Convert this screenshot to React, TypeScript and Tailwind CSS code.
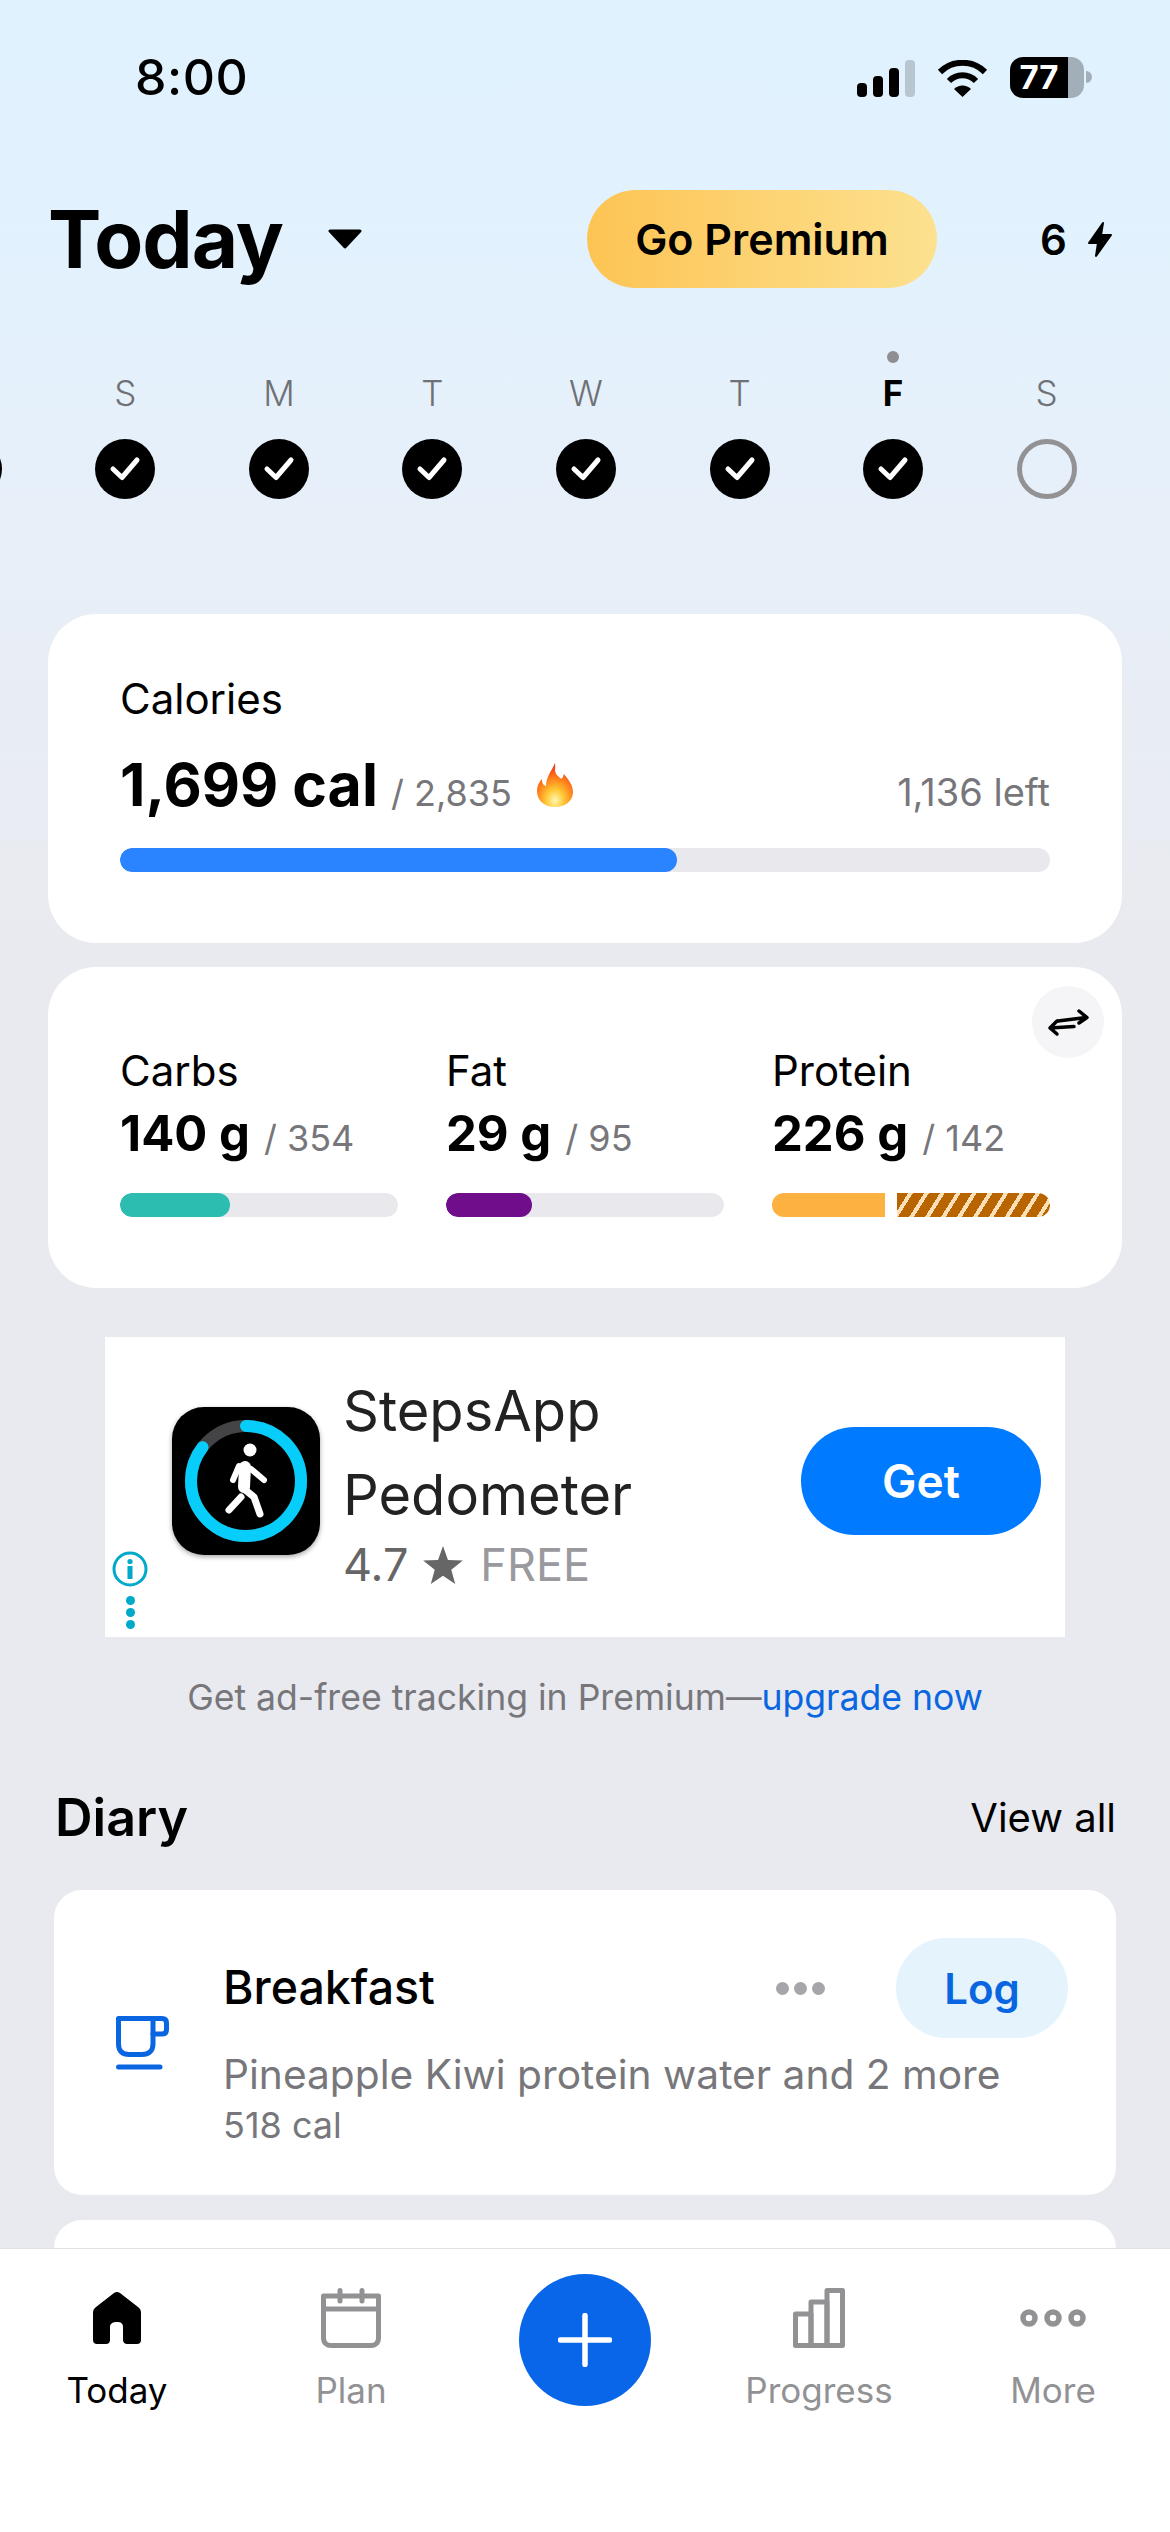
const days = [
  { label: '', done: true },
  { label: 'S', done: true },
  { label: 'M', done: true },
  { label: 'T', done: true },
  { label: 'W', done: true },
  { label: 'T', done: true },
  { label: 'F', done: true, today: true },
  { label: 'S', done: false },
  { label: '', done: false }
]

function StatusBar() {
  return (
    <div className="flex h-[154px] items-center pl-[135px] pr-[78px]">
      <span className="text-[50px] font-medium tracking-[0.5px] text-black">8:00</span>
      <div className="ml-auto flex items-center">
        <svg width="58" height="37" viewBox="0 0 58 37" className="mt-[2px]">
          <rect x="0" y="23" width="10" height="14" rx="4" fill="#000" />
          <rect x="16" y="16" width="10" height="21" rx="4" fill="#000" />
          <rect x="32" y="8" width="10" height="29" rx="4" fill="#000" />
          <rect x="48" y="0" width="10" height="37" rx="4" fill="#b8c6cf" />
        </svg>
        <svg width="51" height="37" viewBox="0 0 51 37" className="ml-[22px] mt-[2px]">
          <path d="M3 12 A 32 32 0 0 1 48 12" fill="none" stroke="#000" strokeWidth="6" />
          <path d="M12 21 A 19 19 0 0 1 39 21" fill="none" stroke="#000" strokeWidth="6" />
          <path d="M17 29 A 12 12 0 0 1 34 29 L25.5 37 Z" fill="#000" />
        </svg>
        <div className="ml-[22px] flex h-[41px] w-[74px] overflow-hidden rounded-[13px]">
          <div className="flex w-[58px] items-center justify-center bg-black text-[33px] font-bold leading-none text-white">
            77
          </div>
          <div className="flex-1 bg-[#a2afb9]" />
        </div>
        <div className="ml-[2px] h-[12px] w-[6px] rounded-r-full bg-[#a2afb9]" />
      </div>
    </div>
  )
}

function Header() {
  return (
    <div className="mt-[36px] flex h-[98px] items-center pl-[48px]">
      <span className="text-[80px] font-bold leading-none tracking-[-1px] text-black">Today</span>
      <svg width="36" height="20" viewBox="0 0 36 20" className="ml-[44px]">
        <path d="M3 2 H33 L18 18 Z" fill="#000" stroke="#000" strokeWidth="3" strokeLinejoin="round" />
      </svg>
      <button className="ml-[224px] flex h-[98px] w-[350px] items-center justify-center rounded-[49px] bg-gradient-to-r from-[#fdc452] to-[#fce18f] text-[43px] font-semibold text-black">
        Go Premium
      </button>
      <span className="ml-[103px] text-[42px] font-semibold text-black">6</span>
      <svg width="24" height="35" viewBox="0 0 24 35" className="ml-[21px]">
        <path d="M15 1 L1 21 H10 L8 34 L23 13 H13 Z" fill="#000" stroke="#000" strokeWidth="2" strokeLinejoin="round" />
      </svg>
    </div>
  )
}

function WeekStrip() {
  return (
    <div className="ml-[-105px] mt-[63px] grid w-[1382px] grid-cols-9">
      {days.map((d, i) => (
        <div key={i} className="flex flex-col items-center">
          <div className={`h-3 w-3 rounded-full ${d.today ? 'bg-[#8e8e93]' : 'bg-transparent'}`} />
          <span
            className={`mt-[8px] h-[44px] text-[35px] leading-[44px] ${
              d.today ? 'font-bold text-black' : 'font-light text-[#6f7175]'
            }`}
          >
            {d.label}
          </span>
          {d.done ? (
            <div className="mt-[24px] flex h-[60px] w-[60px] items-center justify-center rounded-full bg-black">
              <svg width="60" height="60" viewBox="0 0 60 60">
                <path d="M18 30 L27 38.5 L42 21" fill="none" stroke="#fff" strokeWidth="5" strokeLinecap="round" strokeLinejoin="round" />
              </svg>
            </div>
          ) : (
            <div className="mt-[24px] h-[60px] w-[60px] rounded-full border-[5px] border-[#929295]" />
          )}
        </div>
      ))}
    </div>
  )
}

function Flame() {
  return (
    <svg width="38" height="46" viewBox="0 0 38 46" className="ml-[24px] self-center">
      <defs>
        <radialGradient id="flame" cx="50%" cy="85%" r="75%">
          <stop offset="0%" stopColor="#fff7b0" />
          <stop offset="35%" stopColor="#ffc531" />
          <stop offset="70%" stopColor="#ff7a1a" />
          <stop offset="100%" stopColor="#f0401a" />
        </radialGradient>
      </defs>
      <path
        d="M19 1 C20 7 17 10 23 15 C27 19 27 14 28 12 C32 17 37 23 37 30 C37 39 29 45 19 45 C9 45 1 39 1 29 C1 24 3 20 6 17 C6 21 7 23 10 24 C10 15 15 10 19 1 Z"
        fill="url(#flame)"
      />
    </svg>
  )
}

function CaloriesCard() {
  return (
    <div className="mx-[48px] mt-[115px] h-[329px] rounded-[48px] bg-white px-[72px] pt-[61px]">
      <div className="text-[42px] leading-[48px] text-black">Calories</div>
      <div className="mt-[28px] flex h-[68px] items-baseline">
        <span className="text-[59px] font-bold leading-[68px] text-black">1,699 cal</span>
        <span className="ml-[13px] text-[36px] text-[#77777b]">/ 2,835</span>
        <Flame />
        <span className="ml-auto text-[38px] text-[#77777b]">1,136 left</span>
      </div>
      <div className="mt-[29px] h-[24px] overflow-hidden rounded-[12px] bg-[#e9e9ed]">
        <div className="h-full w-[557px] rounded-[12px] bg-[#2a84ff]" />
      </div>
    </div>
  )
}

function Macro({ name, value, goal, children }: { name: string; value: string; goal: string; children: React.ReactNode }) {
  return (
    <div>
      <div className="text-[42px] leading-[48px] text-black">{name}</div>
      <div className="mt-[9px] flex h-[60px] items-baseline whitespace-nowrap">
        <span className="text-[49px] font-bold leading-[60px] text-black">{value}</span>
        <span className="ml-[14px] text-[36px] text-[#77777b]">/ {goal}</span>
      </div>
      <div className="mt-[29px] flex h-[24px] overflow-hidden rounded-[12px]">{children}</div>
    </div>
  )
}

function MacrosCard() {
  return (
    <div className="relative mx-[48px] mt-[24px] grid h-[321px] grid-cols-3 gap-x-[48px] rounded-[48px] bg-white px-[72px] pt-[80px]">
      <Macro name="Carbs" value="140 g" goal="354">
        <div className="h-full w-full rounded-[12px] bg-[#e9e9ed]">
          <div className="h-full w-[110px] rounded-[12px] bg-[#2cbcb0]" />
        </div>
      </Macro>
      <Macro name="Fat" value="29 g" goal="95">
        <div className="h-full w-full rounded-[12px] bg-[#e9e9ed]">
          <div className="h-full w-[86px] rounded-[12px] bg-[#6f0d8a]" />
        </div>
      </Macro>
      <Macro name="Protein" value="226 g" goal="142">
        <div className="h-full w-[113px] bg-[#fdb140]" />
        <div className="ml-[12px] h-full flex-1 bg-[repeating-linear-gradient(122deg,#b86400_0,#b86400_9.5px,#fde0b8_9.5px,#fde0b8_13.5px)]" />
      </Macro>
      <div className="absolute right-[18px] top-[19px] h-[72px] w-[72px] rounded-full bg-[#f5f5f7]">
        <svg width="72" height="72" viewBox="0 0 72 72">
          <g fill="none" stroke="#000" strokeWidth="3.5" strokeLinecap="round" strokeLinejoin="round">
            <path d="M26 35 L54 31.5 M47 25 L55 31.5 L47 37" />
            <path d="M18 42 L42 40.5 M25 35 L18 42 L25 48" />
          </g>
        </svg>
      </div>
    </div>
  )
}

function AppIcon() {
  return (
    <div className="ml-[67px] mt-[70px] h-[148px] w-[148px] shrink-0 rounded-[32px] bg-black shadow-[0_2px_5px_rgba(0,0,0,0.35)]">
      <svg width="148" height="148" viewBox="0 0 148 148">
        <circle cx="74" cy="74" r="55" fill="none" stroke="#444446" strokeWidth="12" />
        <circle
          cx="74"
          cy="74"
          r="55"
          fill="none"
          stroke="#06cdfa"
          strokeWidth="12"
          strokeLinecap="round"
          strokeDasharray="295 346"
          transform="rotate(-90 74 74)"
        />
        <circle cx="78" cy="43" r="6.5" fill="#fff" />
        <g fill="none" stroke="#fff" strokeLinecap="round" strokeLinejoin="round">
          <path d="M73 60 L72 80" strokeWidth="12" />
          <path d="M67 59 L61 73" strokeWidth="6" />
          <path d="M79 62 L92 73" strokeWidth="6" />
          <path d="M72 82 L82 90 L88 107" strokeWidth="7" />
          <path d="M69 90 L57 103" strokeWidth="7" />
        </g>
      </svg>
    </div>
  )
}

function AdBanner() {
  return (
    <div className="relative mx-[105px] mt-[49px] flex h-[300px] bg-white">
      <AppIcon />
      <div className="ml-[23px] pt-[32px]">
        <div className="text-[56px] leading-[84px] text-[#222]">StepsApp</div>
        <div className="text-[56px] leading-[84px] text-[#222]">Pedometer</div>
        <div className="mt-[2px] flex h-[52px] items-center text-[45px] leading-[52px]">
          <span className="text-[#666]">4.7</span>
          <svg width="40" height="38" viewBox="0 0 24 23" className="ml-[15px]">
            <path d="M12 0 L15 8.5 L24 8.8 L17 14.3 L19.4 23 L12 18 L4.6 23 L7 14.3 L0 8.8 L9 8.5 Z" fill="#666" />
          </svg>
          <span className="ml-[17px] text-[#9a9a9e]">FREE</span>
        </div>
      </div>
      <button className="ml-auto mr-[24px] mt-[90px] h-[108px] w-[240px] rounded-[54px] bg-[#007aff] text-[46px] font-semibold text-white">
        Get
      </button>
      <div className="absolute bottom-[8px] left-[7px] flex flex-col items-center">
        <svg width="36" height="36" viewBox="0 0 36 36">
          <circle cx="18" cy="18" r="16" fill="none" stroke="#00a9c9" strokeWidth="3" />
          <circle cx="18" cy="10.5" r="2.6" fill="#00a9c9" />
          <rect x="15.5" y="15" width="5" height="13" fill="#00a9c9" />
        </svg>
        <div className="mt-[9px] flex flex-col gap-[3px]">
          <div className="h-[9px] w-[9px] rounded-full bg-[#00a9c9]" />
          <div className="h-[9px] w-[9px] rounded-full bg-[#00a9c9]" />
          <div className="h-[9px] w-[9px] rounded-full bg-[#00a9c9]" />
        </div>
      </div>
    </div>
  )
}

function DiaryCard() {
  return (
    <div className="mx-[54px] mt-[40px] flex h-[305px] items-center rounded-[28px] bg-white">
      <svg width="56" height="56" viewBox="0 0 56 56" className="ml-[61px] shrink-0" fill="none" stroke="#0a66e0" strokeWidth="5" strokeLinecap="round" strokeLinejoin="round">
        <path d="M3.5 3.5 H38 V29 C38 36 33.5 39.5 27 39.5 H14 C7.5 39.5 3.5 36 3.5 29 Z" />
        <path d="M38 3.5 H47 C50 3.5 51.5 5 51.5 8 V14.5 C51.5 17.5 50 19 47 19 H38" />
        <path d="M3.5 52 H45" />
      </svg>
      <div className="ml-[52px] flex-1 pr-[48px]">
        <div className="flex h-[100px] items-center">
          <span className="text-[46.5px] font-medium text-black">Breakfast</span>
          <div className="ml-auto mr-[71px] flex gap-[5px]">
            <div className="h-[13px] w-[13px] rounded-full bg-[#a6a6aa]" />
            <div className="h-[13px] w-[13px] rounded-full bg-[#a6a6aa]" />
            <div className="h-[13px] w-[13px] rounded-full bg-[#a6a6aa]" />
          </div>
          <button className="h-[100px] w-[172px] rounded-[50px] bg-[#e5f3fd] text-[42px] font-semibold text-[#0a66e0]">
            Log
          </button>
        </div>
        <div className="mt-[11px] text-[40.7px] leading-[52px] text-[#77777b]">
          Pineapple Kiwi protein water and 2 more
        </div>
        <div className="mt-[2px] text-[36px] leading-[44px] text-[#77777b]">518 cal</div>
      </div>
    </div>
  )
}

function NavItem({ label, active, children }: { label: string; active?: boolean; children: React.ReactNode }) {
  return (
    <div className="flex flex-col items-center pt-[39px]">
      <div className="flex h-[60px] items-center justify-center">{children}</div>
      <span className={`mt-[20px] text-[35px] leading-[44px] ${active ? 'text-black' : 'text-[#929295]'}`}>{label}</span>
    </div>
  )
}

function BottomNav() {
  return (
    <div className="grid h-[284px] shrink-0 grid-cols-5 border-t border-[#e2e2e6] bg-white">
      <NavItem label="Today" active>
        <svg width="48" height="52" viewBox="0 0 48 52">
          <path
            fillRule="evenodd"
            d="M24 0 C25 0 26 .5 27 1 L45 15 C47 16.5 48 18 48 21 V48 C48 50.5 46.5 52 44 52 H34 C32 52 30 50.5 30 48 V35 C30 31 27.5 30 24 30 C20.5 30 17 31 17 35 V48 C17 50.5 15.5 52 13 52 H4 C1.5 52 0 50.5 0 48 V21 C0 18 1 16.5 3 15 L21 1 C22 .5 23 0 24 0 Z"
            fill="#000"
          />
        </svg>
      </NavItem>
      <NavItem label="Plan">
        <svg width="60" height="60" viewBox="0 0 60 60" fill="none" stroke="#929295" strokeWidth="5" strokeLinecap="round">
          <path d="M2.5 8 H57.5 V50 C57.5 55 54 57.5 50 57.5 H10 C6 57.5 2.5 55 2.5 50 Z" strokeLinejoin="round" />
          <path d="M2.5 21 H57.5" />
          <path d="M19 2.5 V13 M41 2.5 V13" />
        </svg>
      </NavItem>
      <div className="flex justify-center pt-[25px]">
        <button className="flex h-[132px] w-[132px] items-center justify-center rounded-full bg-[#0a66e8]">
          <svg width="54" height="54" viewBox="0 0 54 54" fill="none" stroke="#fff" strokeWidth="5.5" strokeLinecap="round">
            <path d="M27 2.5 V51.5 M2.5 27 H51.5" />
          </svg>
        </button>
      </div>
      <NavItem label="Progress">
        <svg width="52" height="60" viewBox="0 0 52 60" fill="none" stroke="#929295" strokeWidth="5" strokeLinejoin="round">
          <path d="M2.5 26 H18 V57.5 H2.5 Z" />
          <path d="M18 14 H34 V57.5 H18 Z" />
          <path d="M34 2.5 H49.5 V57.5 H34 Z" />
        </svg>
      </NavItem>
      <NavItem label="More">
        <svg width="66" height="18" viewBox="0 0 66 18" fill="none" stroke="#929295" strokeWidth="5.5">
          <circle cx="9" cy="9" r="6" />
          <circle cx="33" cy="9" r="6" />
          <circle cx="57" cy="9" r="6" />
        </svg>
      </NavItem>
    </div>
  )
}

export default function App() {
  return (
    <div className="flex h-[2532px] w-[1170px] flex-col overflow-hidden bg-[linear-gradient(180deg,#e0f2fe_0,#e1f2fe_200px,#e8eff8_560px,#e9eaef_960px)] font-['Inter',sans-serif]">
      <div className="min-h-0 flex-1 overflow-hidden">
        <StatusBar />
        <Header />
        <WeekStrip />
        <CaloriesCard />
        <MacrosCard />
        <AdBanner />
        <div className="mt-[39px] text-center text-[35.6px] leading-[44px] text-[#77777b]">
          Get ad-free tracking in Premium—<span className="text-[#0a66e0]">upgrade now</span>
        </div>
        <div className="mt-[66px] flex h-[64px] items-center pl-[55px] pr-[54px]">
          <span className="text-[52px] font-semibold text-black">Diary</span>
          <span className="ml-auto text-[40px] text-black">View all</span>
        </div>
        <DiaryCard />
        <div className="mx-[54px] mt-[25px] h-[200px] rounded-[28px] bg-white" />
      </div>
      <BottomNav />
    </div>
  )
}
